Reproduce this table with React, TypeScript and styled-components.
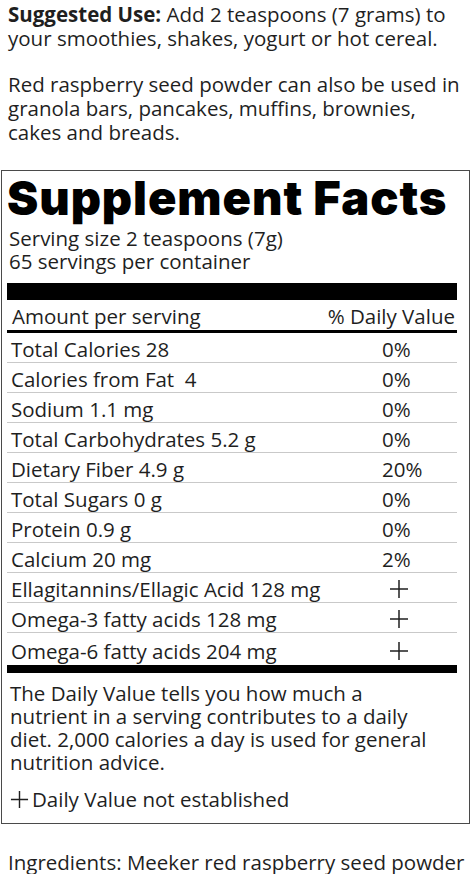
import React from 'react';
import styled, { createGlobalStyle } from 'styled-components';

type Nutrient = {
  label: string;
  value: string;
};

const NUTRIENTS: Nutrient[] = [
  { label: 'Total Calories 28', value: '0%' },
  { label: 'Calories from Fat  4', value: '0%' },
  { label: 'Sodium 1.1 mg', value: '0%' },
  { label: 'Total Carbohydrates 5.2 g', value: '0%' },
  { label: 'Dietary Fiber 4.9 g', value: '20%' },
  { label: 'Total Sugars 0 g', value: '0%' },
  { label: 'Protein 0.9 g', value: '0%' },
  { label: 'Calcium 20 mg', value: '2%' },
  { label: 'Ellagitannins/Ellagic Acid 128 mg', value: '+' },
  { label: 'Omega-3 fatty acids 128 mg', value: '+' },
  { label: 'Omega-6 fatty acids 204 mg', value: '+' },
];

// thin "not established" cross
const Cross: React.FC<{ size?: number }> = ({ size = 20 }) => (
  <CrossIcon viewBox="0 0 20 20" width={size} height={size} aria-hidden="true">
    <path d="M10 1v18M1 10h18" />
  </CrossIcon>
);

const App: React.FC = () => {
  return (
    <>
      <GlobalStyle />
      <Page>
        <Intro>
          <p>
            <strong>Suggested Use:</strong> Add 2 teaspoons (7 grams) to
            <br />
            your smoothies, shakes, yogurt or hot cereal.
          </p>
          <p>
            Red raspberry seed powder can also be used in
            <br />
            granola bars, pancakes, muffins, brownies,
            <br />
            cakes and breads.
          </p>
        </Intro>

        <FactsBox>
          <Title>Supplement Facts</Title>
          <Serving>Serving size 2 teaspoons (7g)</Serving>
          <Serving>65 servings per container</Serving>
          <Bar $size={17} $gap={10} />

          <HeaderRow>
            <span>Amount per serving</span>
            <span>% Daily Value</span>
          </HeaderRow>

          {NUTRIENTS.map(({ label, value }, i) => (
            <Row key={label} $last={i === NUTRIENTS.length - 1}>
              <Label>{label}</Label>
              <Value>{value === '+' ? <Cross /> : value}</Value>
            </Row>
          ))}

          <Bar $size={8} $gap={0} />

          <Note>
            The Daily Value tells you how much a
            <br />
            nutrient in a serving contributes to a daily
            <br />
            diet. 2,000 calories a day is used for general
            <br />
            nutrition advice.
          </Note>
          <Legend>
            <Cross size={19} />
            Daily Value not established
          </Legend>
        </FactsBox>

        <Ingredients>Ingredients: Meeker red raspberry seed powder</Ingredients>
      </Page>
    </>
  );
};

const GlobalStyle = createGlobalStyle`
  body {
    margin: 0;
    background: #ffffff;
    color: #1f1f1f;
    font-family: 'Open Sans', 'Noto Sans', sans-serif;
  }
`;

const Page = styled.div`
  width: 473px;
  font-size: 20.5px;
`;

const Intro = styled.div`
  padding: 2px 8px 0;
  line-height: 24px;
  white-space: nowrap;

  p {
    margin: 0;
  }

  p + p {
    margin-top: 22px;
  }

  strong {
    font-weight: 700;
  }
`;

const FactsBox = styled.div`
  margin: 26px 3px 0 1px;
  border: 1px solid #4a4a4a;
  padding: 0 12px 12px 5px;
`;

const Title = styled.h1`
  margin: 2px 0 4px;
  font-family: Inter, 'Liberation Sans', sans-serif;
  font-weight: 900;
  font-size: 47px;
  letter-spacing: 0.9px;
  line-height: 50px;
  color: #000;
  white-space: nowrap;
`;

const Serving = styled.div`
  line-height: 23px;
  padding-left: 2px;
`;

const Bar = styled.div<{ $size: number; $gap: number }>`
  margin-top: ${({ $gap }) => $gap}px;
  height: ${({ $size }) => $size}px;
  background: #000;
`;

const HeaderRow = styled.div`
  display: flex;
  justify-content: space-between;
  height: 33px;
  box-sizing: border-box;
  padding: 2px 2px 0 5px;
  line-height: 28px;
  border-bottom: 3px solid #000;
`;

const Row = styled.div<{ $last: boolean }>`
  display: flex;
  align-items: center;
  height: ${({ $last }) => ($last ? 32 : 30)}px;
  padding-top: 3px;
  box-sizing: border-box;
  line-height: 26px;
  border-bottom: ${({ $last }) => ($last ? 'none' : '1px solid #c9c9c9')};
`;

const Label = styled.span`
  flex: 1;
  padding-left: 4px;
  white-space: pre;
`;

const Value = styled.span`
  width: 75px;
  display: flex;
  align-items: center;

  svg {
    margin-left: 7px;
  }
`;

const CrossIcon = styled.svg`
  display: block;
  fill: none;
  stroke: #1f1f1f;
  stroke-width: 1.5;
`;

const Note = styled.div`
  padding: 9px 3px 0;
  line-height: 23px;
  white-space: nowrap;
`;

const Legend = styled.div`
  display: flex;
  align-items: center;
  gap: 3px;
  margin-top: 13px;
  padding-left: 3px;
  line-height: 24px;
`;

const Ingredients = styled.div`
  margin-top: 26px;
  padding: 0 8px;
  line-height: 24px;
  white-space: nowrap;
`;

export default App;
